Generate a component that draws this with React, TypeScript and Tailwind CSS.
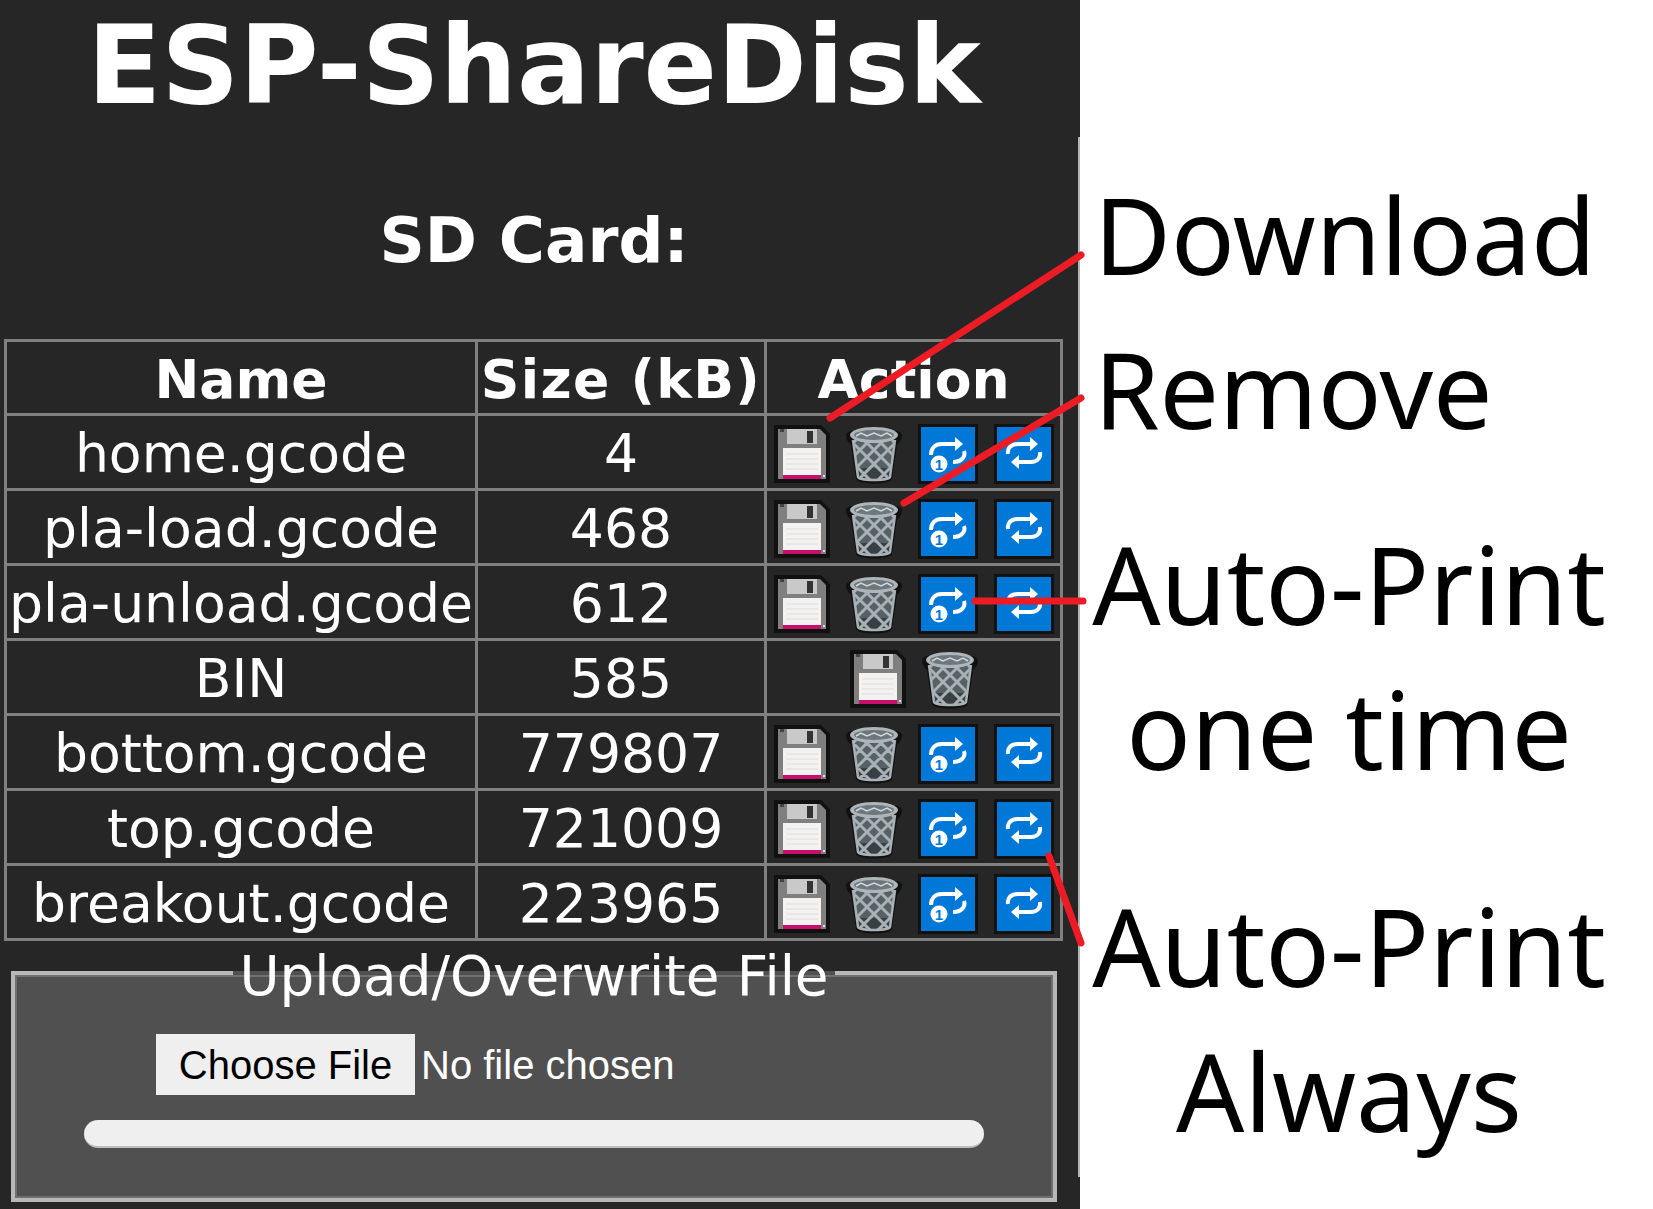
const FILES = [
  { name: 'home.gcode', size: '4', print: true },
  { name: 'pla-load.gcode', size: '468', print: true },
  { name: 'pla-unload.gcode', size: '612', print: true },
  { name: 'BIN', size: '585', print: false },
  { name: 'bottom.gcode', size: '779807', print: true },
  { name: 'top.gcode', size: '721009', print: true },
  { name: 'breakout.gcode', size: '223965', print: true },
];

function FloppyIcon() {
  return (
    <svg width="56" height="58" viewBox="0 0 56 58" className="shrink-0">
      <path d="M0 0H47L56 9V58H0Z" fill="#111" />
      <path d="M4 4H46L52 10V54H4Z" fill="#7f7f7f" />
      <path d="M13 4H43V19H13Z" fill="#c9c9c9" />
      <rect x="33" y="6" width="6" height="12" fill="#333" />
      <rect x="6" y="4" width="4" height="3" fill="#444" />
      <rect x="9" y="23" width="38" height="31" fill="#f4f1f1" />
      <path d="M12 29H44M12 34H44M12 39H44M12 44H44" stroke="#dcdcdc" strokeWidth="1" />
      <rect x="9" y="50" width="38" height="4" fill="#c8106a" />
      <rect x="49" y="50" width="2" height="2" fill="#ddd" />
    </svg>
  );
}

function TrashIcon() {
  return (
    <svg width="56" height="60" viewBox="0 0 56 60" className="shrink-0">
      <path d="M0 11C0 2 56 2 56 11C56 16 53 19 51 21L46 55C45 61 11 61 10 55L5 21C3 19 0 16 0 11Z" fill="#111" />
      <clipPath id="trash-body">
        <path d="M7 16H49L44 53C43 57 13 57 12 53Z" />
      </clipPath>
      <g clipPath="url(#trash-body)">
        <rect x="0" y="10" width="56" height="50" fill="#566166" />
        <rect x="0" y="44" width="56" height="16" fill="#384044" />
        <path
          d="M-6 26L28 60M4 16L48 60M18 16L62 60M32 16L70 54M46 16L70 40M62 26L28 60M52 16L8 60M38 16L-6 60M24 16L-14 54M10 16L-14 40"
          stroke="#a8b1b5"
          strokeWidth="3"
          fill="none"
        />
      </g>
      <path d="M7 16L12 53C13 57 43 57 44 53L49 16" fill="none" stroke="#a8b1b5" strokeWidth="2.5" />
      <ellipse cx="28" cy="11" rx="24" ry="8" fill="#aeb6ba" />
      <ellipse cx="28" cy="11" rx="20" ry="5" fill="#6d787c" />
      <path d="M10 12L15 9L21 12L28 9L35 12L41 9L46 12" fill="none" stroke="#d2d7d9" strokeWidth="1.5" />
    </svg>
  );
}

function RepeatOneIcon() {
  return (
    <svg width="60" height="60" viewBox="0 0 60 60" className="shrink-0">
      <rect width="60" height="60" fill="#111" />
      <rect x="3" y="3" width="54" height="54" fill="#0078d7" />
      <path d="M13 31C13 24 17 20 24 20H38" fill="none" stroke="#fff" strokeWidth="4" />
      <path d="M37 13L45 20L37 27Z" fill="#fff" />
      <path d="M46 27C48 33 43 38 35 38" fill="none" stroke="#fff" strokeWidth="4" />
      <circle cx="21" cy="40" r="8.5" fill="#fff" />
      <text x="21" y="45.5" textAnchor="middle" fontSize="15" fontWeight="700" fill="#0078d7" fontFamily="'Liberation Sans', sans-serif">
        1
      </text>
    </svg>
  );
}

function RepeatAllIcon() {
  return (
    <svg width="60" height="60" viewBox="0 0 60 60" className="shrink-0">
      <rect width="60" height="60" fill="#111" />
      <rect x="3" y="3" width="54" height="54" fill="#0078d7" />
      <path d="M14 30C13 24 17 20 24 20H37" fill="none" stroke="#fff" strokeWidth="4" />
      <path d="M36 13L44 20L36 27Z" fill="#fff" />
      <path d="M46 28C47 34 43 38 37 38H24" fill="none" stroke="#fff" strokeWidth="4" />
      <path d="M25 31L17 38L25 45Z" fill="#fff" />
    </svg>
  );
}

function FileRow({ name, size, print }: { name: string; size: string; print: boolean }) {
  return (
    <tr className="h-[75px]">
      <td className="border-[3px] border-[#808080] p-0 pt-[4px] text-center whitespace-nowrap">{name}</td>
      <td className="border-[3px] border-[#808080] p-0 pt-[4px] text-center">{size}</td>
      <td className="border-[3px] border-[#808080] p-0 pt-[3px]">
        <div className="flex items-center justify-center gap-[16px]">
          <FloppyIcon />
          <TrashIcon />
          {print && <RepeatOneIcon />}
          {print && <RepeatAllIcon />}
        </div>
      </td>
    </tr>
  );
}

function UploadBox() {
  return (
    <fieldset className="mx-[11px] mt-[14px] h-[247px] border-[4px] border-[#b8b8b8] bg-[#505050] text-center shadow-[inset_0_0_0_2px_#707070]">
      <legend className="mx-auto px-[6px] pt-[6px] text-[54.8px] leading-[30px] text-white">Upload/Overwrite File</legend>
      <div className="flex pt-[43px] pl-[141px] font-['Liberation_Sans',sans-serif] text-[40px]">
        <span className="flex h-[61px] w-[259px] items-center justify-center bg-[#efefef] text-black">Choose File</span>
        <span className="ml-[6px] flex items-center text-white">No file chosen</span>
      </div>
      <div className="mx-[69px] mt-[25px] h-[28px] rounded-full border-b-2 border-[#bdbdbd] bg-[#efefef]" />
    </fieldset>
  );
}

function Annotations() {
  return (
    <div className="flex w-[573px] flex-col bg-white pt-[161px] font-['Noto_Sans',sans-serif] text-[105.5px] leading-[147px] text-black">
      <div className="pl-[14px]">Download</div>
      <div className="mt-[7px] pl-[14px]">Remove</div>
      <div className="mt-[49px] w-[538px] text-center text-[107px] leading-[145px]">
        Auto-Print
        <br />
        one time
      </div>
      <div className="mt-[72px] w-[538px] text-center text-[107px] leading-[145px]">
        Auto-Print
        <br />
        Always
      </div>
    </div>
  );
}

export default function App() {
  return (
    <div className="relative flex h-[1209px] w-[1653px] overflow-hidden bg-white">
      <div className="w-[1080px] bg-[#262626] font-['DejaVu_Sans',sans-serif] text-[53.6px] text-white">
        <div className="w-[1068px]">
          <h1 className="pt-[4px] text-center text-[108.4px] leading-[124px] font-bold">ESP-ShareDisk</h1>
          <h2 className="pt-[77px] text-center text-[62.9px] leading-[72px] font-bold">SD Card:</h2>
          <table className="mt-[62px] ml-[4px] w-[1056px] table-fixed border-collapse leading-[60px]">
            <colgroup>
              <col className="w-[471px]" />
              <col className="w-[289px]" />
              <col className="w-[296px]" />
            </colgroup>
            <thead>
              <tr className="h-[74px]">
                <th className="border-[3px] border-[#808080] p-0 pt-[4px] font-bold">Name</th>
                <th className="border-[3px] border-[#808080] p-0 pt-[4px] font-bold tracking-[1.3px] whitespace-nowrap">Size (kB)</th>
                <th className="border-[3px] border-[#808080] p-0 pt-[4px] font-bold">Action</th>
              </tr>
            </thead>
            <tbody>
              {FILES.map((file) => (
                <FileRow key={file.name} {...file} />
              ))}
            </tbody>
          </table>
          <UploadBox />
        </div>
      </div>
      <Annotations />
      {/* red pointer lines and the faint seam drawn over the page */}
      <svg className="absolute inset-0" width="1653" height="1209" viewBox="0 0 1653 1209">
        <line x1="1079" y1="137" x2="1079" y2="1177" stroke="#b4b4b4" strokeWidth="2" />
        <g stroke="#ed1c24" strokeWidth="7" strokeLinecap="round">
          <line x1="1081" y1="255" x2="830" y2="418" />
          <line x1="1081" y1="398" x2="904" y2="503" />
          <line x1="975" y1="601" x2="1083" y2="601" />
          <line x1="1049" y1="856" x2="1081" y2="943" />
        </g>
      </svg>
    </div>
  );
}
